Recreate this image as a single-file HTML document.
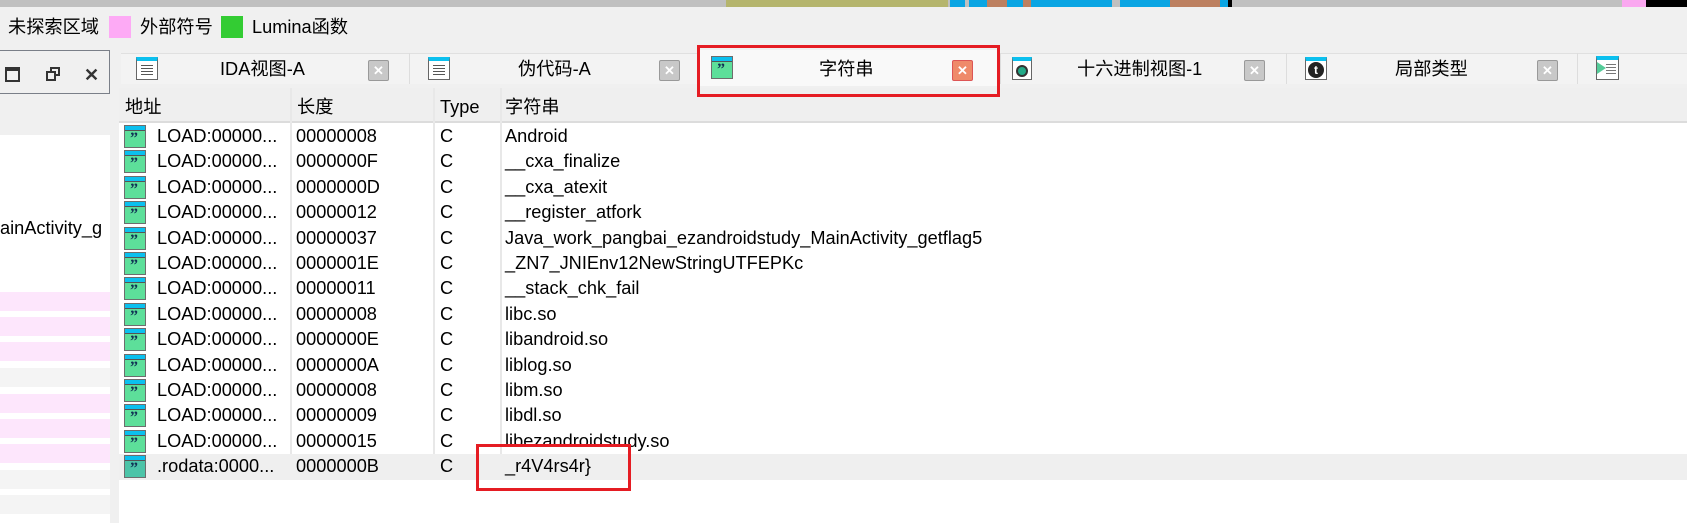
<!DOCTYPE html>
<html><head><meta charset="utf-8"><style>
*{margin:0;padding:0;box-sizing:border-box}
body{width:1687px;height:523px;overflow:hidden;background:#f0f0f0;font-family:"Segoe UI","Liberation Sans","Noto Sans CJK SC",sans-serif;font-size:18.2px;color:#000;position:relative}
.a{position:absolute}
.t{position:absolute;white-space:nowrap;line-height:1}
.ic{position:absolute;width:22px;height:23px;border:1px solid #6d6d6d;background:#5ddf9a}
.ic:before{content:"";position:absolute;left:0;right:0;top:0;height:4px;background:#0bc0ef;border-bottom:1px solid #555}
.ic:after{content:"\201D";position:absolute;left:5px;top:4px;font:bold 16px "Liberation Serif",serif;color:#135}
.cl{position:absolute;width:21px;height:21px;background:#c8c8c8;border:1px solid #999;border-radius:2px;color:#fff;font:bold 13px "Liberation Sans",sans-serif;text-align:center;line-height:19px}
.row{position:absolute;left:119px;width:1568px;height:25.4px}
.row span{position:absolute;top:3px;line-height:1;white-space:nowrap}
</style></head><body>
<div class="a" style="left:0;top:0;width:1687px;height:7px;background:#c0c0c0"></div>
<div class="a" style="left:726px;top:0;width:222px;height:7px;background:#b5b56d"></div>
<div class="a" style="left:950px;top:0;width:278px;height:7px;background:#0aa5e3"></div>
<div class="a" style="left:965px;top:0;width:4px;height:7px;background:#c0c0c0"></div>
<div class="a" style="left:987px;top:0;width:20px;height:7px;background:#bd8060"></div>
<div class="a" style="left:1023px;top:0;width:8px;height:7px;background:#bd8060"></div>
<div class="a" style="left:1112px;top:0;width:8px;height:7px;background:#c0c0c0"></div>
<div class="a" style="left:1170px;top:0;width:50px;height:7px;background:#bd8060"></div>
<div class="a" style="left:1228px;top:0;width:4px;height:7px;background:#000"></div>
<div class="a" style="left:1622px;top:0;width:24px;height:7px;background:#faa8f0"></div>
<div class="a" style="left:1646px;top:0;width:41px;height:7px;background:#000"></div>
<div class="t" style="left:8px;top:18px">未探索区域</div>
<div class="a" style="left:109px;top:16px;width:22px;height:22px;background:#fdaaf5"></div>
<div class="t" style="left:140px;top:18px">外部符号</div>
<div class="a" style="left:221px;top:16px;width:22px;height:22px;background:#33cc33"></div>
<div class="t" style="left:252px;top:18px">Lumina函数</div>
<div class="a" style="left:-2px;top:50px;width:112px;height:44px;border:1px solid #7a7f88"></div>
<div class="a" style="left:5px;top:67px;width:15px;height:15px;border:2px solid #333;border-top-width:4px"></div>
<div class="a" style="left:50px;top:67px;width:10px;height:9px;border:2px solid #333"></div>
<div class="a" style="left:46px;top:71px;width:10px;height:10px;border:2px solid #333;background:#f0f0f0"></div>
<div class="t" style="left:84px;top:65px;font:bold 18px 'Liberation Sans',sans-serif;color:#333">✕</div>
<div class="a" style="left:0;top:135px;width:110px;height:388px;background:#fff"></div>
<div class="t" style="left:0;top:219px">ainActivity_g</div>
<div class="a" style="left:0;top:292px;width:110px;height:19px;background:#fde6fc"></div>
<div class="a" style="left:0;top:317px;width:110px;height:19px;background:#fde6fc"></div>
<div class="a" style="left:0;top:342px;width:110px;height:19px;background:#fde6fc"></div>
<div class="a" style="left:0;top:368px;width:110px;height:19px;background:#f4f4f4"></div>
<div class="a" style="left:0;top:394px;width:110px;height:19px;background:#fde6fc"></div>
<div class="a" style="left:0;top:419px;width:110px;height:19px;background:#fde6fc"></div>
<div class="a" style="left:0;top:444px;width:110px;height:19px;background:#fde6fc"></div>
<div class="a" style="left:0;top:470px;width:110px;height:19px;background:#f4f4f4"></div>
<div class="a" style="left:0;top:495px;width:110px;height:19px;background:#f4f4f4"></div>
<div class="a" style="left:121px;top:53px;width:1566px;height:31px;background:#f3f3f3;border-top:1px solid #e0e0e0"></div>
<div class="a" style="left:409px;top:53px;width:1px;height:31px;background:#ddd"></div>
<div class="a" style="left:1000px;top:53px;width:1px;height:31px;background:#ddd"></div>
<div class="a" style="left:1286px;top:53px;width:1px;height:31px;background:#ddd"></div>
<div class="a" style="left:1577px;top:53px;width:1px;height:31px;background:#ddd"></div>
<div class="a" style="left:699px;top:50px;width:300px;height:36px;background:#f9f9f9"></div>
<div class="a" style="left:136px;top:57px;width:22px;height:23px;border:1px solid #666;background:#fff;border-top:4px solid #0bc0ef"><div class="a" style="left:4px;top:4px;width:12px;height:12px;background:repeating-linear-gradient(#555 0 1px,#fff 1px 3px)"></div></div>
<div class="a" style="left:428px;top:57px;width:22px;height:23px;border:1px solid #666;background:#fff;border-top:4px solid #0bc0ef"><div class="a" style="left:4px;top:4px;width:12px;height:12px;background:repeating-linear-gradient(#555 0 1px,#fff 1px 3px)"></div></div>
<div class="ic" style="left:711px;top:56px"></div>
<div class="a" style="left:1012px;top:57px;width:20px;height:23px;border:1px solid #666;background:#fff;border-top:4px solid #0bc0ef"><div class="a" style="left:3px;top:4px;width:12px;height:12px;border:2px solid #333;border-radius:50%;background:#2a8"></div></div>
<div class="a" style="left:1305px;top:57px;width:22px;height:23px;border:1px solid #666;background:#fff;border-top:4px solid #0bc0ef"><div class="a" style="left:2px;top:1px;width:16px;height:16px;border-radius:50%;background:#222;color:#fff;font:bold 12px 'Liberation Sans',sans-serif;text-align:center;line-height:16px">t</div></div>
<div class="a" style="left:1596px;top:56px;width:23px;height:24px;border:1px solid #666;background:#fff;border-top:4px solid #0bc0ef"><div class="a" style="left:0;top:2px;width:0;height:0;border-left:9px solid #5c9;border-top:6px solid transparent;border-bottom:6px solid transparent"></div><div class="a" style="left:9px;top:4px;width:10px;height:12px;background:repeating-linear-gradient(#777 0 1px,#fff 1px 3px)"></div></div>
<div class="t" style="left:220px;top:60px">IDA视图-A</div>
<div class="t" style="left:518px;top:60px">伪代码-A</div>
<div class="t" style="left:819px;top:60px">字符串</div>
<div class="t" style="left:1077px;top:60px">十六进制视图-1</div>
<div class="t" style="left:1395px;top:60px">局部类型</div>
<div class="cl" style="left:368px;top:60px">✕</div>
<div class="cl" style="left:659px;top:60px">✕</div>
<div class="cl" style="left:952px;top:60px;background:#ef8a6a;border-color:#d55">✕</div>
<div class="cl" style="left:1244px;top:60px">✕</div>
<div class="cl" style="left:1537px;top:60px">✕</div>
<div class="a" style="left:119px;top:88px;width:1568px;height:35px;background:#efefef;border-bottom:2px solid #dcdcdc"></div>
<div class="a" style="left:119px;top:123px;width:1568px;height:400px;background:#fff"></div>
<div class="a" style="left:290px;top:88px;width:2px;height:380px;background:#e8e8e8"></div>
<div class="a" style="left:433px;top:88px;width:2px;height:380px;background:#e8e8e8"></div>
<div class="a" style="left:500px;top:88px;width:2px;height:380px;background:#e8e8e8"></div>
<div class="t" style="left:125px;top:98px">地址</div>
<div class="t" style="left:297px;top:98px">长度</div>
<div class="t" style="left:440px;top:98px">Type</div>
<div class="t" style="left:505px;top:98px">字符串</div>
<div class="row" style="top:124px"><div class="ic" style="left:5px;top:1px"></div><span style="left:38px">LOAD:00000...</span><span style="left:177px">00000008</span><span style="left:321px">C</span><span style="left:386px">Android</span></div>
<div class="row" style="top:149.4px"><div class="ic" style="left:5px;top:1px"></div><span style="left:38px">LOAD:00000...</span><span style="left:177px">0000000F</span><span style="left:321px">C</span><span style="left:386px">__cxa_finalize</span></div>
<div class="row" style="top:174.8px"><div class="ic" style="left:5px;top:1px"></div><span style="left:38px">LOAD:00000...</span><span style="left:177px">0000000D</span><span style="left:321px">C</span><span style="left:386px">__cxa_atexit</span></div>
<div class="row" style="top:200.2px"><div class="ic" style="left:5px;top:1px"></div><span style="left:38px">LOAD:00000...</span><span style="left:177px">00000012</span><span style="left:321px">C</span><span style="left:386px">__register_atfork</span></div>
<div class="row" style="top:225.6px"><div class="ic" style="left:5px;top:1px"></div><span style="left:38px">LOAD:00000...</span><span style="left:177px">00000037</span><span style="left:321px">C</span><span style="left:386px">Java_work_pangbai_ezandroidstudy_MainActivity_getflag5</span></div>
<div class="row" style="top:251px"><div class="ic" style="left:5px;top:1px"></div><span style="left:38px">LOAD:00000...</span><span style="left:177px">0000001E</span><span style="left:321px">C</span><span style="left:386px">_ZN7_JNIEnv12NewStringUTFEPKc</span></div>
<div class="row" style="top:276.4px"><div class="ic" style="left:5px;top:1px"></div><span style="left:38px">LOAD:00000...</span><span style="left:177px">00000011</span><span style="left:321px">C</span><span style="left:386px">__stack_chk_fail</span></div>
<div class="row" style="top:301.8px"><div class="ic" style="left:5px;top:1px"></div><span style="left:38px">LOAD:00000...</span><span style="left:177px">00000008</span><span style="left:321px">C</span><span style="left:386px">libc.so</span></div>
<div class="row" style="top:327.2px"><div class="ic" style="left:5px;top:1px"></div><span style="left:38px">LOAD:00000...</span><span style="left:177px">0000000E</span><span style="left:321px">C</span><span style="left:386px">libandroid.so</span></div>
<div class="row" style="top:352.6px"><div class="ic" style="left:5px;top:1px"></div><span style="left:38px">LOAD:00000...</span><span style="left:177px">0000000A</span><span style="left:321px">C</span><span style="left:386px">liblog.so</span></div>
<div class="row" style="top:378px"><div class="ic" style="left:5px;top:1px"></div><span style="left:38px">LOAD:00000...</span><span style="left:177px">00000008</span><span style="left:321px">C</span><span style="left:386px">libm.so</span></div>
<div class="row" style="top:403.4px"><div class="ic" style="left:5px;top:1px"></div><span style="left:38px">LOAD:00000...</span><span style="left:177px">00000009</span><span style="left:321px">C</span><span style="left:386px">libdl.so</span></div>
<div class="row" style="top:428.8px"><div class="ic" style="left:5px;top:1px"></div><span style="left:38px">LOAD:00000...</span><span style="left:177px">00000015</span><span style="left:321px">C</span><span style="left:386px">libezandroidstudy.so</span></div>
<div class="row" style="top:454.2px;background:#efefef"><div class="ic" style="left:5px;top:1px;background:#4cc4a8"></div><span style="left:38px">.rodata:0000...</span><span style="left:177px">0000000B</span><span style="left:321px">C</span><span style="left:386px">_r4V4rs4r}</span></div>
<div class="a" style="left:697px;top:45px;width:303px;height:52px;border:3px solid #e51c23"></div>
<div class="a" style="left:476px;top:444px;width:155px;height:47px;border:3px solid #e51c23"></div>
</body></html>
